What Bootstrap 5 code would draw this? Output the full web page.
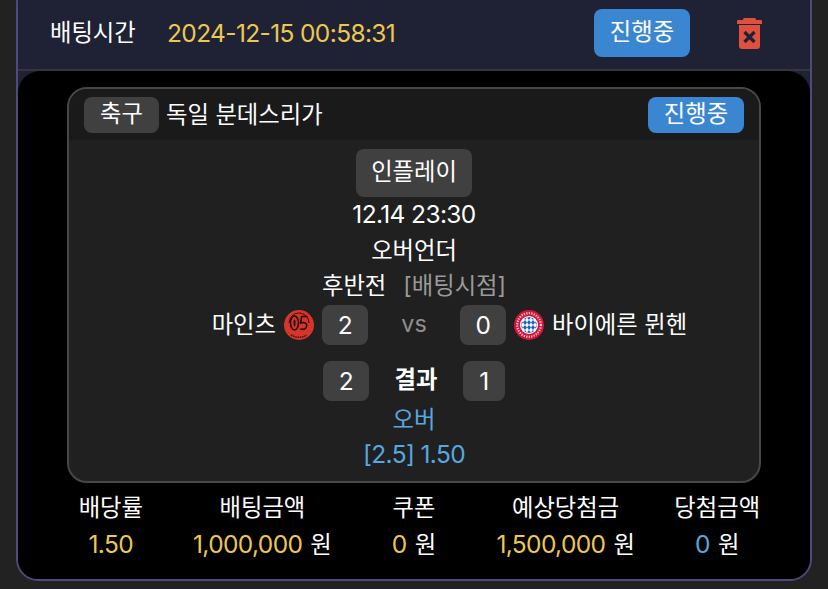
<!DOCTYPE html>
<html lang="ko">
<head>
    <meta charset="UTF-8">
    <meta name="viewport" content="width=device-width, initial-scale=1.0">
    <title>배팅내역</title>
    <link href="https://cdn.jsdelivr.net/npm/bootstrap@5.3.0/dist/css/bootstrap.min.css" rel="stylesheet">
    <style>
        body {
            background-color: #222222;
            color: #ffffff;
            font-family: "Inter", "Noto Sans CJK KR", sans-serif;
            font-size: 23.3px;
            line-height: 36px;
            overflow: hidden;
        }
        .bet-box {
            margin: -20px 16px 0 16px;
            height: 601px;
            background-color: #1f2235;
            border: 2px solid #4e4a7e;
            border-radius: 22px;
            overflow: hidden;
        }
        .bet-head {
            height: 89px;
            padding: 15px 48px 0 32px;
            border-bottom: 2px solid #35353f;
        }
        .head-label { width: 117px; }
        .time-text { color: #edc84f; }
        .num-text { font-size: 24.5px; letter-spacing: -0.63px; }
        .status-btn {
            background-color: #3b86d1;
            border-radius: 8px;
            color: #ffffff;
            text-align: center;
            width: 96px;
            height: 48px;
            line-height: 46px;
        }
        .trash-icon { margin-left: 47px; display: block; }
        .bet-body {
            background-color: #000000;
            border-radius: 22px 22px 0 0;
            height: 510px;
            padding-top: 16px;
        }
        .game-box {
            margin: 0 49px;
            height: 396px;
            background-color: #202020;
            border: 2px solid #474747;
            border-radius: 20px;
            overflow: hidden;
        }
        .game-head {
            height: 51px;
            background-color: #1a1a1a;
            padding: 8px 15px 0 15px;
        }
        .sport-tag {
            background-color: #404040;
            border-radius: 8px;
            width: 75px;
            height: 36px;
            line-height: 34px;
            text-align: center;
            margin-right: 7px;
        }
        .game-head .status-btn {
            height: 36px;
            line-height: 34px;
        }
        .game-main {
            padding-top: 9px;
            text-align: center;
        }
        .inplay-tag {
            display: inline-block;
            background-color: #404040;
            border-radius: 8px;
            width: 116px;
            height: 48px;
            line-height: 46px;
            vertical-align: top;
        }
        .line-text { height: 35.5px; line-height: 35.5px; }
        .point-text { color: #9a9a9a; margin-left: 17px; }
        .score-row { height: 40px; margin-top: 1px; }
        .score-side { flex: 1 1 0; gap: 8px; }
        .side-left { padding-right: 8px; }
        .side-right { padding-left: 8px; }
        .score-num {
            background-color: #404040;
            border-radius: 8px;
            width: 46px;
            height: 40px;
            line-height: 40px;
        }
        .score-mid { width: 92px; color: #8f8f8f; padding-top: 1px; }
        .result-row { margin-top: 16px; }
        .result-mid { width: 94px; font-weight: 700; padding-top: 1px; }
        .num-small { width: 42px; }
        .pick-top { margin-top: 1px; }
        .pick-text { color: #58a8e0; }
        .sum-row {
            display: grid;
            grid-template-columns: repeat(5, 1fr);
            margin: 7px 17px 0 17px;
            text-align: center;
        }
        .sum-val { color: #edc84f; }
        .sum-blue { color: #58a8e0; }
        .won-text { color: #ffffff; margin-left: 8px; font-size: 23.3px; letter-spacing: 0; }
    </style>
</head>
<body>
    <div class="bet-box">
        <!-- header -->
        <div class="bet-head d-flex align-items-center">
            <div class="head-label">배팅시간</div>
            <div class="time-text num-text flex-grow-1">2024-12-15 00:58:31</div>
            <div class="status-btn">진행중</div>
            <svg class="trash-icon" width="25" height="31" viewBox="0 0 25 31">
                <path fill="#e0503f" d="M6 1.500Q6 0 7.500 0h10Q19 0 19 1.500V2h5a1 1 0 0 1 1 1v3H0V3a1 1 0 0 1 1-1h5z"/>
                <path fill="#e0503f" d="M2 7h21v21a3 3 0 0 1-3 3H5a3 3 0 0 1-3-3z"/>
                <path stroke="#1f2235" stroke-width="3.200" d="M7.500 14l10 10M17.500 14l-10 10"/>
            </svg>
        </div>

        <div class="bet-body">
            <div class="game-box">
                <div class="game-head d-flex">
                    <div class="sport-tag">축구</div>
                    <div class="flex-grow-1">독일 분데스리가</div>
                    <div class="status-btn">진행중</div>
                </div>
                <div class="game-main">
                    <div class="inplay-tag">인플레이</div>
                    <div class="line-text num-text">12.14 23:30</div>
                    <div class="line-text">오버언더</div>
                    <div class="line-text">후반전<span class="point-text">[배팅시점]</span></div>

                    <div class="score-row d-flex justify-content-center">
                        <div class="score-side side-left d-flex justify-content-end align-items-center">
                            <span>마인츠</span>
                            <svg width="30" height="30" viewBox="0 0 30 30">
                                <circle cx="15" cy="15" r="15" fill="#d8352a"/>
                                <path d="M5 13A10 10 0 0 1 25 13" fill="none" stroke="#3a0f0b" stroke-width="1"/>
                                <ellipse cx="10.500" cy="13" rx="4" ry="7" fill="none" stroke="#1f0b09" stroke-width="1.600"/>
                                <ellipse cx="10.500" cy="13" rx="1" ry="3.500" fill="#1f0b09"/>
                                <path d="M23.500 6.500h-6l-.8 6.500c3.800-1.200 6.300 0 6 3s-3.200 4-6.500 3" fill="none" stroke="#1f0b09" stroke-width="1.600"/>
                                <path d="M7 25Q15 29.500 23 25" fill="none" stroke="#4a130e" stroke-width="1.600" stroke-dasharray="1.500 .8"/>
                            </svg>
                        </div>
                        <div class="score-num num-text">2</div>
                        <div class="score-mid">vs</div>
                        <div class="score-num num-text">0</div>
                        <div class="score-side side-right d-flex align-items-center">
                            <svg width="30" height="30" viewBox="0 0 30 30">
                                <defs>
                                    <clipPath id="bayern-clip"><circle cx="15" cy="15" r="8"/></clipPath>
                                    <pattern id="bayern-check" width="4" height="5" patternUnits="userSpaceOnUse" x="1" y="0">
                                        <path d="M2 0l2 2.500-2 2.500-2-2.500z" fill="#1a62b8"/>
                                    </pattern>
                                </defs>
                                <circle cx="15" cy="15" r="15" fill="#d5143c"/>
                                <circle cx="15" cy="15" r="11.800" fill="none" stroke="#f6d5dc" stroke-width="2.200" stroke-dasharray="1.200 1.300"/>
                                <circle cx="15" cy="15" r="9" fill="#ffffff"/>
                                <circle cx="15" cy="15" r="8" fill="url(#bayern-check)" clip-path="url(#bayern-clip)"/>
                            </svg>
                            <span>바이에른 뮌헨</span>
                        </div>
                    </div>

                    <div class="score-row result-row d-flex justify-content-center">
                        <div class="score-num num-text">2</div>
                        <div class="result-mid">결과</div>
                        <div class="score-num num-small num-text">1</div>
                    </div>

                    <div class="line-text pick-text pick-top">오버</div>
                    <div class="line-text pick-text num-text">[2.5] 1.50</div>
                </div>
            </div>

            <!-- summary -->
            <div class="sum-row">
                <div>배당률<div class="sum-val num-text">1.50</div></div>
                <div>배팅금액<div class="sum-val num-text">1,000,000<span class="won-text">원</span></div></div>
                <div>쿠폰<div class="sum-val num-text">0<span class="won-text">원</span></div></div>
                <div>예상당첨금<div class="sum-val num-text">1,500,000<span class="won-text">원</span></div></div>
                <div>당첨금액<div class="sum-val num-text"><span class="sum-blue">0</span><span class="won-text">원</span></div></div>
            </div>
        </div>
    </div>
    <script src="https://cdn.jsdelivr.net/npm/bootstrap@5.3.0/dist/js/bootstrap.bundle.min.js"></script>
</body>
</html>
